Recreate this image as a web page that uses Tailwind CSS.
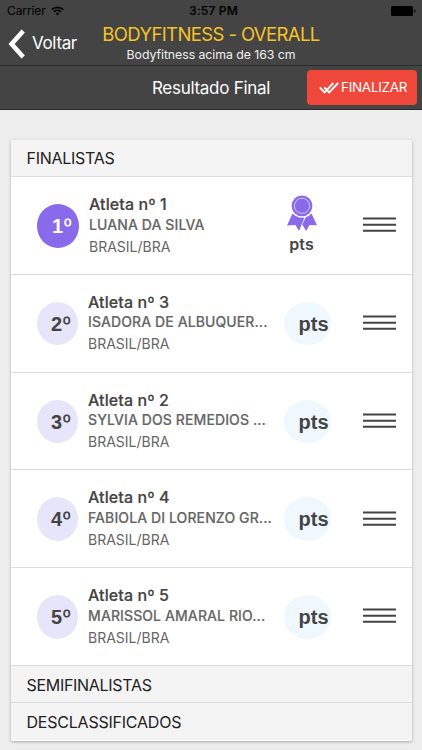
<!DOCTYPE html>
<html lang="pt-BR">
<head>
<meta charset="utf-8">
<title>Resultado Final</title>
<script src="https://cdn.jsdelivr.net/npm/@tailwindcss/browser@4"></script>
</head>
<body class="w-[422px] h-[750px] overflow-hidden bg-[#ededed] font-['Inter',sans-serif] text-[#444] whitespace-nowrap">
<header class="h-[66px] bg-[#444] border-b border-[#2b2b2b]">
  <div class="h-[22px] grid grid-cols-[182px_63px_1fr] items-center text-black">
    <div class="flex items-center gap-[5px] pl-[7px]">
      <span class="text-[12px] leading-[22px] tracking-[-0.1px]">Carrier</span>
      <svg width="13" height="10" viewBox="0 0 13 10" fill="none" stroke="currentColor" stroke-width="1.7"><path d="M.8 3.6a8.2 8.2 0 0 1 11.4 0M2.9 5.8a5.2 5.2 0 0 1 7.2 0"/><path d="M6.5 9.4 4.6 7.5a2.7 2.7 0 0 1 3.8 0z" fill="currentColor" stroke="none"/></svg>
    </div>
    <span class="text-center text-[12px] leading-[22px] font-semibold tracking-[0.15px]">3:57 PM</span>
    <svg class="justify-self-end mr-[6px]" width="25" height="10" viewBox="0 0 25 10" fill="currentColor"><rect width="22" height="10" rx="1.5"/><path d="M23 3.4q1.6.3 1.6 1.6T23 6.6z"/></svg>
  </div>
  <div class="h-[43px] flex">
    <div class="w-[100px] h-[43px] flex items-center pl-2 gap-[7px] text-white">
      <svg width="17" height="30" viewBox="0 0 17 30" fill="none" stroke="currentColor" stroke-width="4.6"><path d="M15.2 2 3.6 15l11.6 13"/></svg>
      <span class="text-[17px] leading-[22px] tracking-[-0.35px] -mt-px">Voltar</span>
    </div>
    <div class="w-[222px] text-center">
      <div class="text-[18.5px] leading-[25px] tracking-[-0.6px] text-[#f7c325]">BODYFITNESS - OVERALL</div>
      <div class="text-[12.3px] leading-[16px] tracking-[-0.05px] text-[#f0f0f0]">Bodyfitness acima de 163 cm</div>
    </div>
  </div>
</header>
<div class="h-[44px] bg-[#444] border-b border-[#2b2b2b] grid grid-cols-[1fr_118px_1fr] items-center">
  <span></span>
  <span class="text-center text-[17px] leading-[22px] tracking-[-0.28px] text-white flex justify-center">Resultado Final</span>
  <button class="justify-self-end mr-[5px] w-[110px] h-[35px] rounded-[4px] bg-[#ef473a] text-white flex items-center pl-[12px] gap-[2px]">
    <svg width="20" height="12" viewBox="0 0 20 12" fill="none" stroke="currentColor" stroke-width="1.9"><path d="M.7 5.5 5.6 10.4 14.3 1M5.2 5.5l4.9 4.9L19.2 1"/></svg>
    <span class="text-[13.5px] leading-[20px] tracking-[-0.3px] -mt-[2px]">FINALIZAR</span>
  </button>
</div>
<main class="mt-[30px] ml-[10.5px] w-[401px] h-[600.5px] rounded-[2px] bg-white shadow-[0_1px_3px_rgba(0,0,0,0.3)] overflow-hidden">
  <h2 class="h-[37px] bg-[#f4f4f4] border-b border-[#ddd] pl-4 text-[16px] leading-[37px] tracking-[-0.28px] text-[#222]">FINALISTAS</h2>
  <div id="rows"></div>
  <h2 class="h-[37.5px] bg-[#f4f4f4] border-b border-[#ddd] pl-4 text-[16px] leading-[38px] tracking-[-0.3px] text-[#222]">SEMIFINALISTAS</h2>
  <h2 class="h-[37px] bg-[#f4f4f4] pl-4 text-[16px] leading-[38px] tracking-[-0.22px] text-[#222]">DESCLASSIFICADOS</h2>
</main>
<script>
const athletes = [[1,'LUANA DA SILVA'],[3,'ISADORA DE ALBUQUER...'],[2,'SYLVIA DOS REMEDIOS ...'],[4,'FABIOLA DI LORENZO GR...'],[5,'MARISSOL AMARAL RIO...']];
const medal = `<div class="w-[34px] flex flex-col items-center">
  <svg width="30" height="36" viewBox="0 0 30 36" fill="#886aea"><path d="M5.5 18.5Q10 23.5 17.5 22.5L12 36 8.5 30 0 30.5zM18.8 22.2Q22 21.5 24.5 18.5L30 30.2 22.5 30 19.2 36 15.2 29.5z"/><circle cx="15" cy="10.8" r="10.4"/><circle cx="15" cy="10.8" r="7.6" fill="none" stroke="#d9cff8" stroke-width=".9"/></svg>
  <span class="mt-[2px] text-[16px] leading-[22px] font-semibold tracking-[0.1px]">pts</span></div>`;
const points = `<div class="w-[47px] h-[43.5px] mt-px rounded-[50%] bg-[#eff7ff] pl-[15px] pt-px text-[20px] leading-[43px] font-bold font-['Liberation_Sans',sans-serif]">pts</div>`;
document.getElementById('rows').innerHTML = athletes.map(([n, name], i) => `
<div class="h-[97.75px] border-b border-[#ddd] flex items-center pl-[26px] pr-4">
  <div class="${i ? 'w-[41px] bg-[#e6e5fa]' : 'w-[42px] bg-[#886aea] text-white'} mr-[10.5px] h-[43.5px] mt-px rounded-[50%] text-right pr-[6px] pt-px text-[20px] leading-[43px] font-bold font-['Liberation_Sans',sans-serif]">${i + 1}<span class="font-['Inter',sans-serif] font-semibold">º</span></div>
  <div class="w-[195.5px] pt-[2px]">
    <div class="text-[16px] leading-[20.5px] font-medium tracking-[0.1px] [-webkit-text-stroke:0.2px_#444]">Atleta nº ${n}</div>
    <div class="text-[14px] leading-[19px] font-medium tracking-[0.1px] [-webkit-text-stroke:0.15px_#666] text-[#666]">${name}</div>
    <div class="text-[14px] leading-[25px] tracking-[0px] text-[#666]">BRASIL/BRA</div>
  </div>
  ${i ? points : medal}
  <svg class="ml-auto" width="33" height="16" viewBox="0 0 33 16" fill="#444"><path d="M0 .5h33v2H0zM0 6.7h33v2H0zM0 12.8h33v2H0z"/></svg>
</div>`).join('');
</script>
</body>
</html>
